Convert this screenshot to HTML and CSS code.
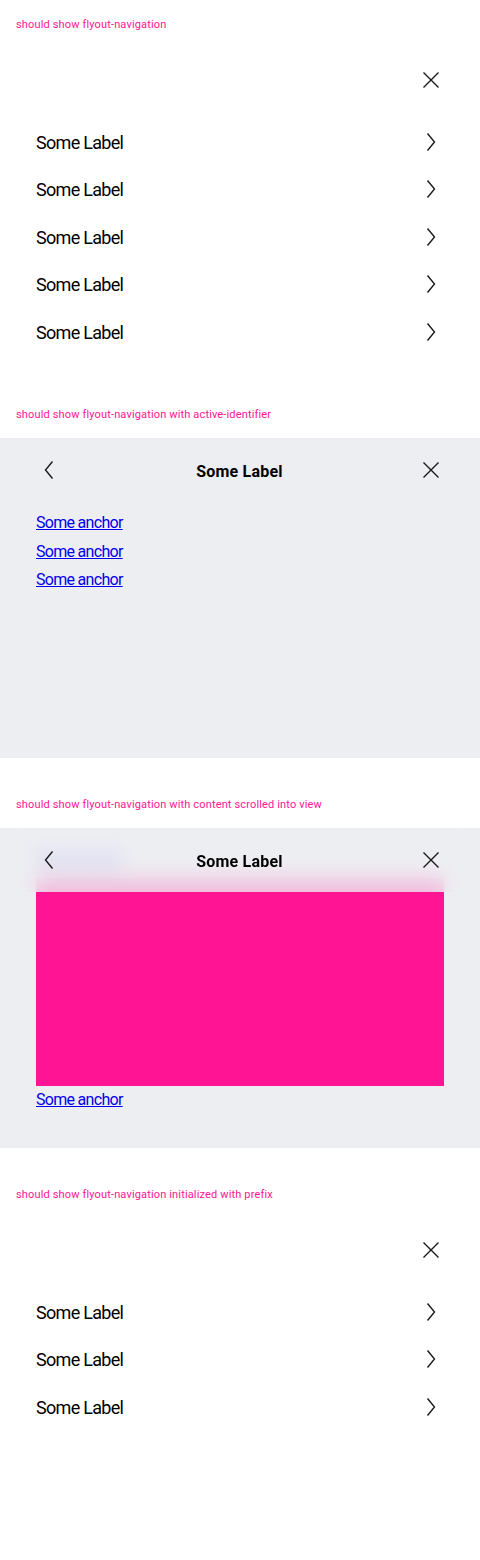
FILE: index.html
```html
<!DOCTYPE html>
<html lang="en">
<head>
<meta charset="utf-8">
<title>Flyout navigation</title>
<link rel="stylesheet" href="styles.css">
</head>
<body>
<main class="page">

  <section class="story">
    <p class="story-label">should show flyout-navigation</p>
    <nav class="flyout">
      <header class="flyout-header">
        <span class="slot"></span>
        <span class="title"></span>
        <button class="icon-btn" aria-label="Close">
          <svg viewBox="0 0 24 24" class="icon"><path d="M4.5 4.5 L19.5 19.5 M19.5 4.5 L4.5 19.5"/></svg>
        </button>
      </header>
      <ul class="menu">
        <li class="menu-item"><span>Some Label</span><svg viewBox="0 0 24 24" class="icon"><polyline points="8.5,3.5 15.5,12 8.5,20.5"/></svg></li>
        <li class="menu-item"><span>Some Label</span><svg viewBox="0 0 24 24" class="icon"><polyline points="8.5,3.5 15.5,12 8.5,20.5"/></svg></li>
        <li class="menu-item"><span>Some Label</span><svg viewBox="0 0 24 24" class="icon"><polyline points="8.5,3.5 15.5,12 8.5,20.5"/></svg></li>
        <li class="menu-item"><span>Some Label</span><svg viewBox="0 0 24 24" class="icon"><polyline points="8.5,3.5 15.5,12 8.5,20.5"/></svg></li>
        <li class="menu-item"><span>Some Label</span><svg viewBox="0 0 24 24" class="icon"><polyline points="8.5,3.5 15.5,12 8.5,20.5"/></svg></li>
      </ul>
    </nav>
  </section>

  <section class="story">
    <p class="story-label">should show flyout-navigation with active-identifier</p>
    <nav class="flyout flyout-sub">
      <header class="flyout-header">
        <button class="icon-btn" aria-label="Back">
          <svg viewBox="0 0 24 24" class="icon"><polyline points="16.5,3.5 9.5,12 16.5,20.5"/></svg>
        </button>
        <span class="title">Some Label</span>
        <button class="icon-btn" aria-label="Close">
          <svg viewBox="0 0 24 24" class="icon"><path d="M4.5 4.5 L19.5 19.5 M19.5 4.5 L4.5 19.5"/></svg>
        </button>
      </header>
      <div class="sub-content">
        <a href="#" class="anchor">Some anchor</a>
        <a href="#" class="anchor">Some anchor</a>
        <a href="#" class="anchor">Some anchor</a>
      </div>
    </nav>
  </section>

  <section class="story">
    <p class="story-label">should show flyout-navigation with content scrolled into view</p>
    <nav class="flyout flyout-sub flyout-overlay">
      <header class="flyout-header flyout-header-glass">
        <button class="icon-btn" aria-label="Back">
          <svg viewBox="0 0 24 24" class="icon"><polyline points="16.5,3.5 9.5,12 16.5,20.5"/></svg>
        </button>
        <span class="title">Some Label</span>
        <button class="icon-btn" aria-label="Close">
          <svg viewBox="0 0 24 24" class="icon"><path d="M4.5 4.5 L19.5 19.5 M19.5 4.5 L4.5 19.5"/></svg>
        </button>
      </header>
      <div class="scroll-area" id="scroll-area">
        <div class="scroll-content">
          <a href="#" class="anchor">Some anchor</a>
          <div class="target-box" id="scroll-target"></div>
          <a href="#" class="anchor">Some anchor</a>
        </div>
      </div>
    </nav>
  </section>

  <section class="story">
    <p class="story-label">should show flyout-navigation initialized with prefix</p>
    <nav class="flyout">
      <header class="flyout-header">
        <span class="slot"></span>
        <span class="title"></span>
        <button class="icon-btn" aria-label="Close">
          <svg viewBox="0 0 24 24" class="icon"><path d="M4.5 4.5 L19.5 19.5 M19.5 4.5 L4.5 19.5"/></svg>
        </button>
      </header>
      <ul class="menu">
        <li class="menu-item"><span>Some Label</span><svg viewBox="0 0 24 24" class="icon"><polyline points="8.5,3.5 15.5,12 8.5,20.5"/></svg></li>
        <li class="menu-item"><span>Some Label</span><svg viewBox="0 0 24 24" class="icon"><polyline points="8.5,3.5 15.5,12 8.5,20.5"/></svg></li>
        <li class="menu-item"><span>Some Label</span><svg viewBox="0 0 24 24" class="icon"><polyline points="8.5,3.5 15.5,12 8.5,20.5"/></svg></li>
      </ul>
    </nav>
  </section>

</main>
<script src="script.js"></script>
</body>
</html>
```

FILE: styles.css
```css
* { box-sizing: border-box; }

body {
  margin: 0;
  background: #fff;
  font-family: Roboto, "Liberation Sans", sans-serif;
  color: #000;
}

.page {
  display: flex;
  flex-direction: column;
  gap: 38px;
  padding-top: 16px;
}

.story-label {
  margin: 0 16px 16px;
  padding-top: 2px;
  font-size: 11px;
  line-height: 14px;
  color: #ff1493;
  letter-spacing: 0.15px;
}

.flyout {
  height: 320px;
  overflow: hidden;
  background: #fff;
}

.flyout-sub {
  background: #edeef2;
}

.flyout-header {
  height: 64px;
  display: grid;
  grid-template-columns: 24px 1fr 24px;
  align-items: center;
  padding: 0 37px 0 36px;
}

.title {
  text-align: center;
  font-size: 16px;
  font-weight: 700;
  letter-spacing: 0.2px;
  padding-top: 2px;
}

.icon-btn {
  width: 24px;
  height: 24px;
  padding: 0;
  border: 0;
  background: none;
  display: block;
}

.icon {
  width: 24px;
  height: 24px;
  display: block;
  fill: none;
  stroke: #191919;
  stroke-width: 1.4;
}

.menu {
  list-style: none;
  margin: 0;
  padding: 6px 37px 0 36px;
}

.menu-item {
  height: 47.5px;
  display: flex;
  align-items: center;
  justify-content: space-between;
  font-size: 18px;
  letter-spacing: -0.7px;
}

.menu-item > span {
  padding-top: 1px;
}

.sub-content {
  padding: 7px 36px 0;
}

.anchor {
  display: block;
  width: max-content;
  font-size: 16px;
  line-height: 28.5px;
  letter-spacing: -0.7px;
  color: #0000ee;
  text-decoration: underline;
}

.flyout-overlay {
  position: relative;
}

.flyout-header-glass {
  position: absolute;
  top: 0;
  left: 0;
  right: 0;
  z-index: 2;
  background: rgba(237, 238, 242, 0.78);
  -webkit-backdrop-filter: blur(10px);
  backdrop-filter: blur(10px);
}

.scroll-area {
  height: 320px;
  overflow: hidden;
  position: relative;
}

.scroll-content {
  padding: 70px 36px 34px;
}

.target-box {
  margin-top: 5px;
  height: 208px;
  background: #ff1493;
}
```

FILE: script.js
```js
(function () {
  var area = document.getElementById('scroll-area');
  var target = document.getElementById('scroll-target');
  if (area && target) {
    area.scrollTop = target.offsetTop - 48;
  }
})();
```
